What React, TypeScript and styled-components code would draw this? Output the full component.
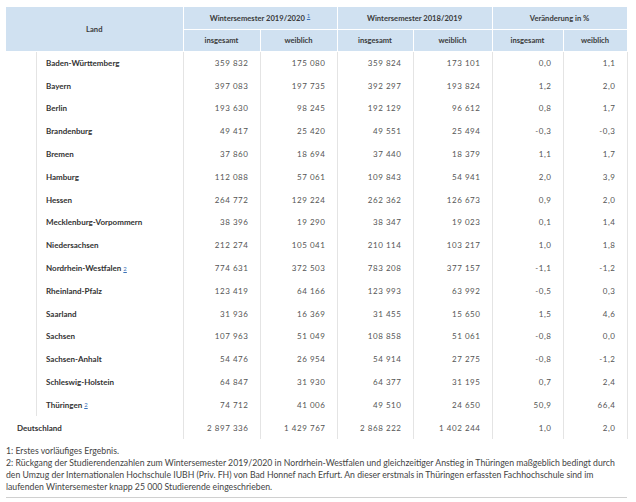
import React from "react";
import styled, { createGlobalStyle } from "styled-components";

const Global = createGlobalStyle`
  html, body { margin: 0; padding: 0; background: #fff; }
  body { font-family: Lato, "Open Sans", "Liberation Sans", sans-serif; color: #333; }
`;

const Page = styled.div`
  padding: 7px 9px 0 6px;
  width: 621px;
`;

const Table = styled.table`
  border-collapse: collapse;
  table-layout: fixed;
  width: 621px;
`;

const HeadRow = styled.tr`
  height: 22px;
`;

const Th = styled.th`
  background: #d0e1f1;
  border: 1px solid #fff;
  border-top: none;
  padding: 0;
  box-sizing: border-box;
  font-size: 7.6px;
  font-weight: 700;
  color: #3a3a3a;
  text-align: center;
  vertical-align: middle;
  &:first-child { border-left: none; }
`;

const Row = styled.tr`
  height: 22.8px;
`;

const LandCell = styled.td`
  padding: 0;
  border-right: 1px solid #e4e4e4;
  font-size: 8px;
  font-weight: 700;
  color: #333;
`;

const Indent = styled.div<{ $total?: boolean }>`
  height: 22.8px;
  display: flex;
  align-items: center;
  margin-left: ${(p) => (p.$total ? "0" : "30px")};
  padding-left: ${(p) => (p.$total ? "11px" : "9px")};
  border-left: ${(p) => (p.$total ? "none" : "1px solid #e4e4e4")};
`;

const Num = styled.td`
  padding: 0 11px 0 0;
  border-right: 1px solid #e4e4e4;
  text-align: right;
  font-size: 8px;
  letter-spacing: 0.55px;
  color: #555;
  vertical-align: middle;
`;

const Sup = styled.a`
  color: #3b72b8;
  font-size: 6px;
  text-decoration: underline;
  vertical-align: 3px;
  margin-left: 2px;
  font-weight: 400;
`;

const Notes = styled.div`
  padding: 6px 0 4px 0;
  border-bottom: 1px solid #d0d0d0;
  font-size: 8.7px;
  line-height: 12px;
  color: #444;
`;

type R = [string, string, string, string, string, string, string, string?];

const rows: R[] = [
  ["Baden-Württemberg", "359 832", "175 080", "359 824", "173 101", "0,0", "1,1"],
  ["Bayern", "397 083", "197 735", "392 297", "193 824", "1,2", "2,0"],
  ["Berlin", "193 630", "98 245", "192 129", "96 612", "0,8", "1,7"],
  ["Brandenburg", "49 417", "25 420", "49 551", "25 494", "-0,3", "-0,3"],
  ["Bremen", "37 860", "18 694", "37 440", "18 379", "1,1", "1,7"],
  ["Hamburg", "112 088", "57 061", "109 843", "54 941", "2,0", "3,9"],
  ["Hessen", "264 772", "129 224", "262 362", "126 673", "0,9", "2,0"],
  ["Mecklenburg-Vorpommern", "38 396", "19 290", "38 347", "19 023", "0,1", "1,4"],
  ["Niedersachsen", "212 274", "105 041", "210 114", "103 217", "1,0", "1,8"],
  ["Nordrhein-Westfalen", "774 631", "372 503", "783 208", "377 157", "-1,1", "-1,2", "2"],
  ["Rheinland-Pfalz", "123 419", "64 166", "123 993", "63 992", "-0,5", "0,3"],
  ["Saarland", "31 936", "16 369", "31 455", "15 650", "1,5", "4,6"],
  ["Sachsen", "107 963", "51 049", "108 858", "51 061", "-0,8", "0,0"],
  ["Sachsen-Anhalt", "54 476", "26 954", "54 914", "27 275", "-0,8", "-1,2"],
  ["Schleswig-Holstein", "64 847", "31 930", "64 377", "31 195", "0,7", "2,4"],
  ["Thüringen", "74 712", "41 006", "49 510", "24 650", "50,9", "66,4", "2"],
];

const total: R = ["Deutschland", "2 897 336", "1 429 767", "2 868 222", "1 402 244", "1,0", "2,0"];

const widths = [177, 77, 77, 76, 79, 71, 64];

function DataRow({ r, isTotal }: { r: R; isTotal?: boolean }) {
  return (
    <Row>
      <LandCell>
        <Indent $total={isTotal}>
          {r[0]}
          {r[7] && <Sup href="#">{r[7]}</Sup>}
        </Indent>
      </LandCell>
      {r.slice(1, 7).map((v, i) => (
        <Num key={i}>{v}</Num>
      ))}
    </Row>
  );
}

export default function App() {
  return (
    <>
      <Global />
      <Page>
        <Table>
          <colgroup>
            {widths.map((w, i) => (
              <col key={i} style={{ width: w }} />
            ))}
          </colgroup>
          <thead>
            <HeadRow>
              <Th rowSpan={2}>Land</Th>
              <Th colSpan={2}>
                Wintersemester 2019/2020<Sup href="#">1</Sup>
              </Th>
              <Th colSpan={2}>Wintersemester 2018/2019</Th>
              <Th colSpan={2}>Veränderung in %</Th>
            </HeadRow>
            <HeadRow>
              <Th>insgesamt</Th>
              <Th>weiblich</Th>
              <Th>insgesamt</Th>
              <Th>weiblich</Th>
              <Th>insgesamt</Th>
              <Th>weiblich</Th>
            </HeadRow>
          </thead>
          <tbody>
            {rows.map((r) => (
              <DataRow key={r[0]} r={r} />
            ))}
            <DataRow r={total} isTotal />
          </tbody>
        </Table>
        <Notes>
          <div>1: Erstes vorläufiges Ergebnis.</div>
          <div>
            2: Rückgang der Studierendenzahlen zum Wintersemester 2019/2020 in Nordrhein-Westfalen und gleichzeitiger Anstieg in Thüringen maßgeblich bedingt durch den Umzug der Internationalen Hochschule IUBH (Priv. FH) von Bad Honnef nach Erfurt. An dieser erstmals in Thüringen erfassten Fachhochschule sind im laufenden Wintersemester knapp 25 000 Studierende eingeschrieben.
          </div>
        </Notes>
      </Page>
    </>
  );
}
